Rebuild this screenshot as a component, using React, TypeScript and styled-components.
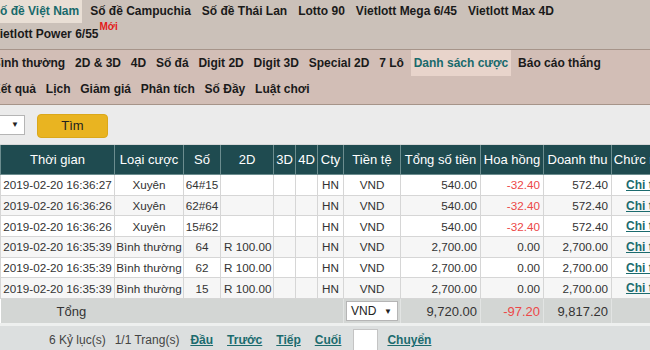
import React from "react";
import styled, { createGlobalStyle } from "styled-components";

const Global = createGlobalStyle`
  html, body { margin: 0; padding: 0; }
  body {
    width: 650px; height: 350px; overflow: hidden;
    font-family: "Liberation Sans", Arial, sans-serif;
    background: #ffffff; color: #333;
  }
`;

const Page = styled.div`
  width: 650px;
  height: 350px;
  overflow: hidden;
  display: flex;
  flex-direction: column;
`;

const MenuBar = styled.div<{ $tone: "top" | "sub" }>`
  background: ${(p) => (p.$tone === "top" ? "#cbc1b9" : "#d2beb6")};
  border-bottom: 1px solid #a69489;
  padding: ${(p) => (p.$tone === "top" ? "0 0 3px" : "0 0 2px")};
  overflow: hidden;
  flex-shrink: 0;
`;

const Nav = styled.ul<{ $gap: number }>`
  list-style: none;
  margin: 0 0 0 -11px;
  padding: 0;
  width: 640px;
  display: flex;
  flex-wrap: wrap;
  column-gap: ${(p) => p.$gap}px;
`;

const NavItem = styled.li<{ $active?: boolean; $h: number }>`
  height: ${(p) => p.$h}px;
  line-height: ${(p) => p.$h}px;
  padding: 0 3px;
  font-size: 12px;
  font-weight: bold;
  white-space: nowrap;
  color: ${(p) => (p.$active ? "#196a6b" : "#1a1a1a")};
  background: ${(p) => (p.$active ? "var(--active-bg)" : "transparent")};
  position: relative;
`;

const NewBadge = styled.span`
  color: #e31b1b;
  font-size: 10px;
  font-weight: bold;
  line-height: 0;
  vertical-align: baseline;
  position: relative;
  top: -8px;
  margin-left: 1px;
`;

const FilterBar = styled.div`
  background: #ebebeb;
  height: 39px;
  flex-shrink: 0;
  display: flex;
  align-items: center;
  gap: 12px;
  border-bottom: 1px solid #d8d8d8;
`;

const MiniSelect = styled.div<{ $w: number }>`
  width: ${(p) => p.$w}px;
  height: 20px;
  background: #fff;
  border: 1px solid #b5b5b5;
  box-sizing: border-box;
  display: flex;
  align-items: center;
  justify-content: space-between;
  padding: 0 5px 0 4px;
  font-size: 12px;
  color: #222;
`;

const Caret = styled.span`
  font-size: 8px;
  color: #222;
`;

const SearchButton = styled.button`
  width: 71px;
  height: 24px;
  background: #e9b421;
  border: 1px solid #dba81a;
  border-radius: 4px;
  font-family: "Liberation Sans", Arial, sans-serif;
  font-size: 13px;
  color: #222;
  padding: 0;
  margin-top: 2px;
`;

const Table = styled.table`
  border-collapse: collapse;
  table-layout: fixed;
  width: 680px;
  font-size: 11.7px;
  color: #333;
  flex-shrink: 0;
`;

const Th = styled.th`
  background: #1f4b50;
  color: #fff;
  font-weight: normal;
  font-size: 13px;
  height: 29px;
  border: 1px solid #6c8d8f;
  border-top: none;
  padding: 0 1px;
  white-space: nowrap;
  overflow: hidden;
`;

const Row = styled.tr<{ $alt: boolean }>`
  background: ${(p) => (p.$alt ? "#f6f6f6" : "#ffffff")};
`;

const Td = styled.td<{ $align?: "left" | "center" | "right"; $red?: boolean }>`
  height: 19.7px;
  padding: 0 3px;
  border: 1px solid #d6d6d6;
  text-align: ${(p) => p.$align || "center"};
  color: ${(p) => (p.$red ? "#ec4848" : "#333")};
  white-space: nowrap;
  overflow: hidden;
`;

const NarrowTd = styled(Td)`
  padding: 0 1px;
`;

const LinkText = styled.a`
  color: #1b6b6e;
  font-weight: bold;
  font-size: 12px;
  text-decoration: underline;
  cursor: pointer;
`;

const TotalRow = styled.tr`
  background: #d3d6d4;
`;

const TotalTd = styled.td<{ $align?: "left" | "center" | "right"; $red?: boolean; $pl?: number }>`
  height: 24px;
  font-size: 13px;
  padding: 0 3px 0 ${(p) => (p.$pl ?? 3)}px;
  text-align: ${(p) => p.$align || "right"};
  color: ${(p) => (p.$red ? "#ec4848" : "#333")};
  border-left: 1px solid #e2e4e3;
  border-top: 1px solid #c8cbc9;
  white-space: nowrap;
`;

const Pager = styled.div`
  border-top: 3px solid #eef0ef;
  background: #dcdfdf;
  flex: 1;
  display: flex;
  align-items: flex-start;
  padding: 7px 0 0 49px;
  font-size: 12px;
  color: #444;
  gap: 9px;
`;

const PagerLink = styled(LinkText)`
  margin-left: 2px;
  padding-right: 3px;
`;

const PageInput = styled.div`
  width: 25px;
  height: 23px;
  background: #fff;
  border: 1px solid #c4c4c4;
  margin-top: -4px;
  box-sizing: border-box;
`;

const topMenu = [
  "Số đề Việt Nam",
  "Số đề Campuchia",
  "Số đề Thái Lan",
  "Lotto 90",
  "Vietlott Mega 6/45",
  "Vietlott Max 4D",
  "Vietlott Power 6/55",
];

const subMenu = [
  "Bình thường",
  "2D & 3D",
  "4D",
  "Số đá",
  "Digit 2D",
  "Digit 3D",
  "Special 2D",
  "7 Lô",
  "Danh sách cược",
  "Báo cáo thắng",
  "Kết quả",
  "Lịch",
  "Giảm giá",
  "Phân tích",
  "Số Đầy",
  "Luật chơi",
];

const cols = [114, 69, 37, 53, 22, 22, 26, 57, 80, 63, 68, 69];
const heads = ["Thời gian", "Loại cược", "Số", "2D", "3D", "4D", "Cty", "Tiền tệ", "Tổng số tiền", "Hoa hồng", "Doanh thu", "Chức năng"];

const rows = [
  ["2019-02-20 16:36:27", "Xuyên", "64#15", "", "540.00", "-32.40", "572.40"],
  ["2019-02-20 16:36:26", "Xuyên", "62#64", "", "540.00", "-32.40", "572.40"],
  ["2019-02-20 16:36:26", "Xuyên", "15#62", "", "540.00", "-32.40", "572.40"],
  ["2019-02-20 16:35:39", "Bình thường", "64", "R 100.00", "2,700.00", "0.00", "2,700.00"],
  ["2019-02-20 16:35:39", "Bình thường", "62", "R 100.00", "2,700.00", "0.00", "2,700.00"],
  ["2019-02-20 16:35:39", "Bình thường", "15", "R 100.00", "2,700.00", "0.00", "2,700.00"],
];

export default function App() {
  return (
    <Page>
      <Global />
      <MenuBar $tone="top" style={{ ["--active-bg" as any]: "#e9dfd5" }}>
        <Nav $gap={5}>
          {topMenu.map((m, i) => (
            <NavItem key={m} $h={23} $active={i === 0}>
              {m}
              {i === topMenu.length - 1 && <NewBadge>Mới</NewBadge>}
            </NavItem>
          ))}
        </Nav>
      </MenuBar>
      <MenuBar $tone="sub" style={{ ["--active-bg" as any]: "#e8d4cb" }}>
        <Nav $gap={3.8}>
          {subMenu.map((m) => (
            <NavItem key={m} $h={26} $active={m === "Danh sách cược"}>
              {m}
            </NavItem>
          ))}
        </Nav>
      </MenuBar>
      <FilterBar>
        <MiniSelect $w={26} style={{ marginLeft: -1 }}>
          <span />
          <Caret>▼</Caret>
        </MiniSelect>
        <SearchButton>Tìm</SearchButton>
      </FilterBar>
      <Table>
        <colgroup>
          {cols.map((w, i) => (
            <col key={i} style={{ width: w }} />
          ))}
        </colgroup>
        <thead>
          <tr>
            {heads.map((h) => (
              <Th key={h}>{h}</Th>
            ))}
          </tr>
        </thead>
        <tbody>
          {rows.map((r, i) => (
            <Row key={i} $alt={i % 2 === 1}>
              <NarrowTd>{r[0]}</NarrowTd>
              <NarrowTd>{r[1]}</NarrowTd>
              <NarrowTd>{r[2]}</NarrowTd>
              <Td $align="left">{r[3]}</Td>
              <Td />
              <Td />
              <NarrowTd>HN</NarrowTd>
              <Td>VND</Td>
              <Td $align="right">{r[4]}</Td>
              <Td $align="right" $red={r[5].startsWith("-")}>{r[5]}</Td>
              <Td $align="right">{r[6]}</Td>
              <Td $align="left" style={{ paddingLeft: 14 }}>
                <LinkText>Chi tiết</LinkText>
              </Td>
            </Row>
          ))}
          <TotalRow>
            <TotalTd colSpan={7} $align="left" $pl={56} style={{ borderLeft: "none" }}>
              Tổng
            </TotalTd>
            <TotalTd $align="left" $pl={2}>
              <MiniSelect $w={52}>
                <span>VND</span>
                <Caret>▼</Caret>
              </MiniSelect>
            </TotalTd>
            <TotalTd>9,720.00</TotalTd>
            <TotalTd $red>-97.20</TotalTd>
            <TotalTd>9,817.20</TotalTd>
            <TotalTd />
          </TotalRow>
        </tbody>
      </Table>
      <Pager>
        <span>6 Kỷ lục(s)</span>
        <span>1/1 Trang(s)</span>
        <PagerLink>Đầu</PagerLink>
        <PagerLink>Trước</PagerLink>
        <PagerLink>Tiếp</PagerLink>
        <PagerLink>Cuối</PagerLink>
        <PageInput />
        <LinkText>Chuyển</LinkText>
      </Pager>
    </Page>
  );
}
